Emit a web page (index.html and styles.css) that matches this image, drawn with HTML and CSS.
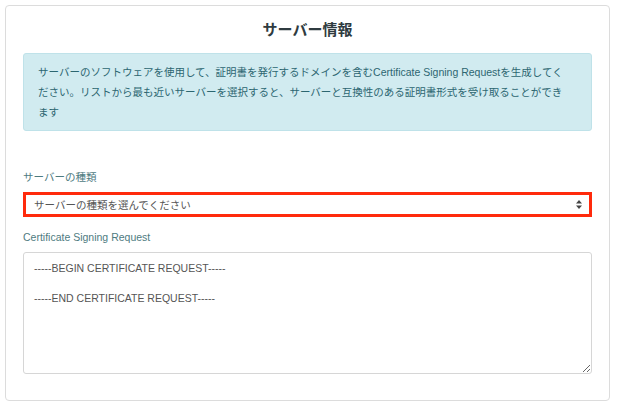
FILE: index.html
```html
<!DOCTYPE html>
<html lang="ja">
<head>
  <meta charset="UTF-8">
  <meta name="viewport" content="width=device-width, initial-scale=1.0">
  <title>サーバー情報</title>
  <link rel="stylesheet" href="styles.css">
</head>
<body>
  <div class="card">
    <h2>サーバー情報</h2>
    <div class="alert">
      サーバーのソフトウェアを使用して、証明書を発行するドメインを含むCertificate Signing Requestを生成してく<br>ださい。リストから最も近いサーバーを選択すると、サーバーと互換性のある証明書形式を受け取ることができ<br>ます
    </div>

    <label for="server-type" class="field-label first">サーバーの種類</label>
    <div class="select-wrap">
      <select id="server-type">
        <option>サーバーの種類を選んでください</option>
      </select>
      <svg class="arrows" width="6" height="9" viewBox="0 0 6 9">
        <path d="M3 0 L6 3.5 H0 Z M3 9 L6 5.5 H0 Z" fill="#444"/>
      </svg>
    </div>

    <label for="csr" class="field-label">Certificate Signing Request</label>
    <textarea id="csr">-----BEGIN CERTIFICATE REQUEST-----

-----END CERTIFICATE REQUEST-----</textarea>
  </div>
</body>
</html>
```

FILE: styles.css
```css
body {
  font-family: "Liberation Sans", "Noto Sans CJK JP", sans-serif;
  margin: 0;
  padding: 0;
  background-color: #fff;
}

.card {
  margin: 5px 7px 0 5px;
  height: 396px;
  box-sizing: border-box;
  padding: 14px 17px 0 17px;
  border: 1px solid #dcdcdc;
  border-radius: 4px;
  background: #fff;
}

h2 {
  margin: 0 0 13px;
  text-align: center;
  font-size: 15px;
  line-height: 20px;
  font-weight: bold;
  color: #2f3b40;
}

.alert {
  padding: 8px 10px 8px 14px;
  font-size: 10.5px;
  line-height: 20px;
  color: #2c6670;
  background-color: #d1ebf0;
  border: 1px solid #bfe2e9;
  border-radius: 3px;
}

.field-label {
  display: block;
  font-size: 10.5px;
  line-height: 14px;
  color: #4e7b7f;
  margin: 13px 0 8px;
}

.field-label.first {
  margin-top: 39px;
}

.select-wrap {
  position: relative;
}

select {
  display: block;
  width: 100%;
  height: 25px;
  padding: 0 8px;
  font-family: inherit;
  font-size: 10.5px;
  color: #555;
  background: #fff;
  border: 3px solid #ff2a0c;
  border-radius: 0;
  appearance: none;
  -webkit-appearance: none;
  outline: none;
}

.arrows {
  position: absolute;
  right: 10px;
  top: 8px;
}

textarea {
  display: block;
  width: 100%;
  height: 122px;
  box-sizing: border-box;
  padding: 8px 10px;
  font-family: inherit;
  font-size: 10.5px;
  line-height: 15px;
  color: #555;
  border: 1px solid #d6d6d6;
  border-radius: 3px;
  resize: vertical;
}
```
